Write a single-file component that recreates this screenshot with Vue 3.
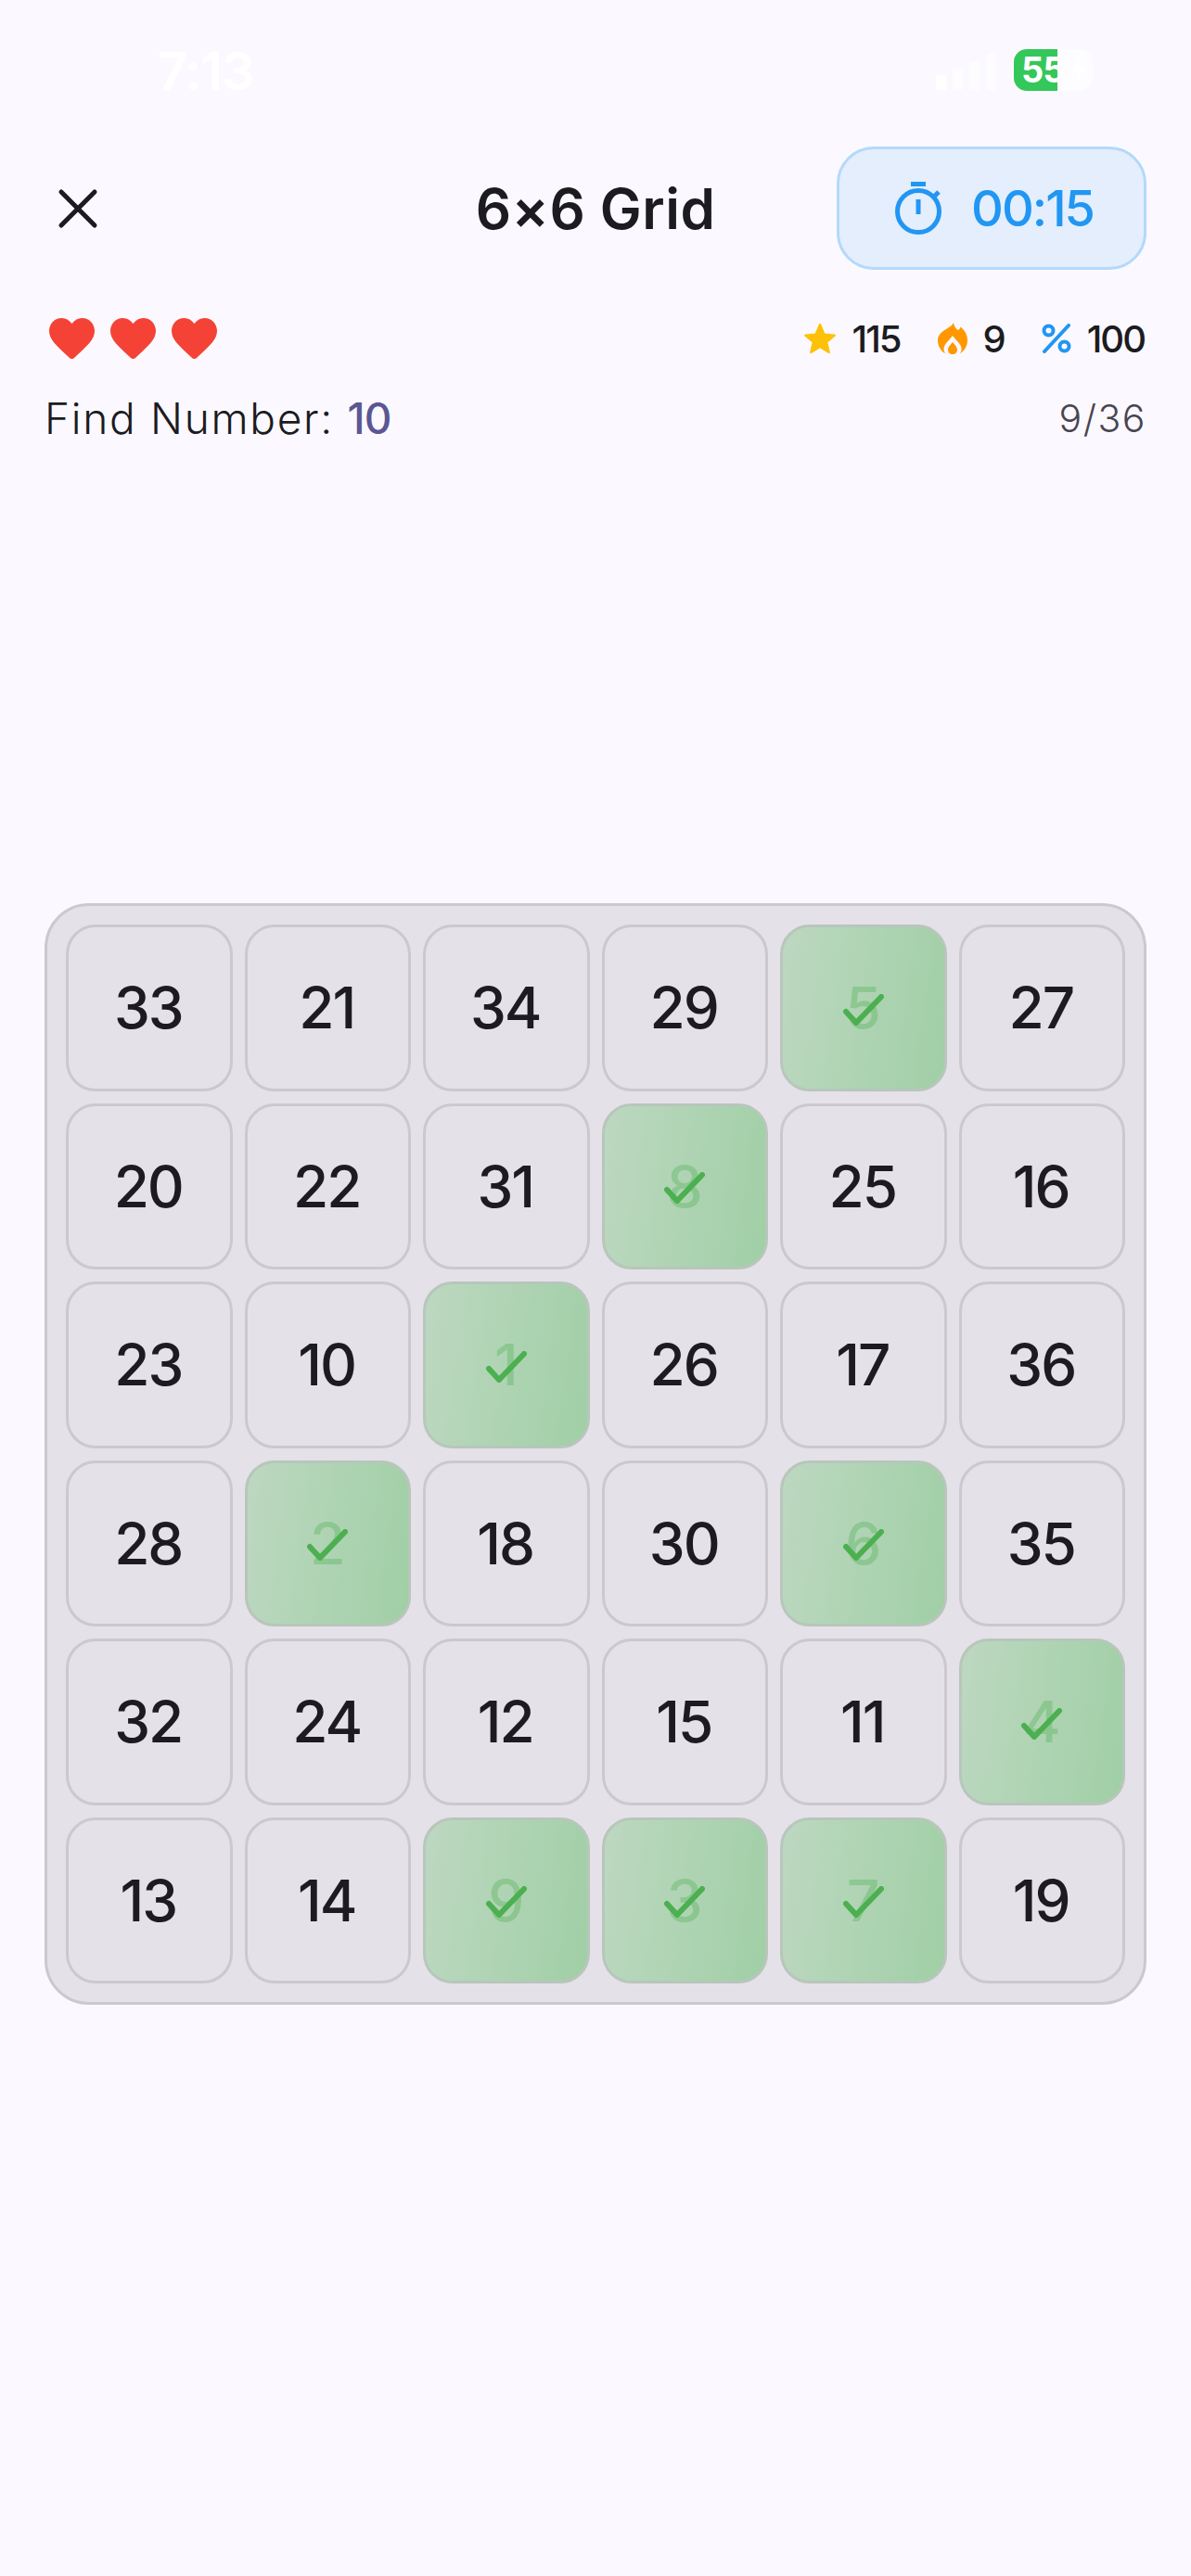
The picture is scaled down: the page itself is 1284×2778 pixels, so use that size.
<template>
  <div class="screen">
    <div class="status-bar">
      <span class="time">7:13</span>
      <div class="status-right">
        <svg class="signal" width="66" height="40" viewBox="0 0 66 40">
          <rect x="0" y="24" width="11" height="16" rx="2" />
          <rect class="off" x="18" y="17" width="11" height="23" rx="2" />
          <rect class="off" x="36" y="9" width="11" height="31" rx="2" />
          <rect class="off" x="54" y="0" width="11" height="40" rx="2" />
        </svg>
        <div class="battery">
          <div class="battery-fill"></div>
          <span class="battery-text">55</span>
          <svg class="bolt" width="18" height="29" viewBox="0 0 18 29">
            <path d="M11 0 L1 17 H8 L6 29 L17 11 H10 Z" />
          </svg>
        </div>
      </div>
    </div>

    <header class="top-bar">
      <svg class="close" width="44" height="44" viewBox="0 0 44 44">
        <path d="M4 4 L40 40 M40 4 L4 40" />
      </svg>
      <h1 class="title">6×6 Grid</h1>
      <div class="timer">
        <svg class="timer-icon" width="50" height="57" viewBox="0 0 50 57">
          <path d="M17 2.500 H33" />
          <circle cx="25" cy="32" r="22.500" />
          <path d="M25 19 V35 M41 17 L47 11" />
        </svg>
        <span>00:15</span>
      </div>
    </header>

    <div class="stats-row">
      <div class="hearts">
        <svg v-for="n in 3" :key="n" width="49" height="44" viewBox="0 0 49 44">
          <path d="M24.500 6 C21.500 2 18 0 13.500 0 C6 0 0 6 0 14 C0 23 8 30 21.500 42.500 C23.500 44.500 25.500 44.500 27.500 42.500 C41 30 49 23 49 14 C49 6 43 0 35.500 0 C31 0 27.500 2 24.500 6 Z" />
        </svg>
      </div>
      <div class="stats">
        <div class="stat">
          <svg width="36" height="36" viewBox="0 0 24 24">
            <path fill="#ffc107" stroke="#ffc107" stroke-width="1.500" stroke-linejoin="round" d="M12 2 L15 9 L22.500 9.700 L16.800 14.600 L18.500 22 L12 18.100 L5.500 22 L7.200 14.600 L1.500 9.700 L9 9 Z" />
          </svg>
          <span>115</span>
        </div>
        <div class="stat">
          <svg width="32" height="34" viewBox="0 0 32 34">
            <path fill="#ff9800" d="M17 0 C18 5 20 7 22 8 C23.500 7 24 6 24.500 4.500 C29 8 32 13 32 19 C32 25 29 30 24 33.500 C26 30 26 27 24 23.500 C22 20.500 18.500 17.500 16 14 C13.500 17.500 10 20.500 8 23.500 C6 27 6 30 8 33.500 C3 30 0 25 0 19 C0 11 8 8 12 5 C14 4 16 2 17 0 Z" />
            <path fill="#ff9800" d="M16 21 C18.500 24 21 26 21 29 C21 32 19 34 16 34 C13 34 11 32 11 29 C11 26 13.500 24 16 21 Z" />
          </svg>
          <span>9</span>
        </div>
        <div class="stat">
          <svg class="percent" width="32" height="32" viewBox="0 0 32 32">
            <circle cx="7.500" cy="7.500" r="5" />
            <circle cx="24.500" cy="24.500" r="5" />
            <path d="M29 2 L3 30" />
          </svg>
          <span>100</span>
        </div>
      </div>
    </div>

    <div class="find-row">
      <div class="find">Find Number: <span class="target">10</span></div>
      <div class="progress">9/36</div>
    </div>

    <main class="board">
      <div v-for="cell in cells" :key="cell" class="cell" :class="{ found: cell <= 9 }">
        <span class="num">{{ cell }}</span>
        <svg v-if="cell <= 9" class="check" width="44" height="34" viewBox="0 0 44 34">
          <path d="M3 19 L14 31 L41 3" />
        </svg>
      </div>
    </main>
  </div>
</template>

<script setup>
const cells = [
  33, 21, 34, 29, 5, 27,
  20, 22, 31, 8, 25, 16,
  23, 10, 1, 26, 17, 36,
  28, 2, 18, 30, 6, 35,
  32, 24, 12, 15, 11, 4,
  13, 14, 9, 3, 7, 19,
]
</script>

<style>
html,
body {
  background: #fbf9ff;
}
</style>

<style scoped>
.screen {
  width: 1284px;
  height: 2778px;
  background: #fbf9ff;
  font-family: Inter, "Liberation Sans", sans-serif;
  color: #1c1b1f;
  overflow: hidden;
}

.status-bar {
  height: 158px;
  box-sizing: border-box;
  padding: 50px 106px 0 170px;
  display: flex;
  justify-content: space-between;
  align-items: flex-start;
  color: #fff;
}

.time {
  font-size: 56px;
  line-height: 54px;
  font-weight: 600;
  letter-spacing: -1px;
}

.status-right {
  display: flex;
  align-items: flex-start;
  gap: 18px;
}

.signal {
  fill: #fff;
  margin-top: 7px;
}

.signal .off {
  opacity: 0.45;
}

.battery {
  position: relative;
  width: 85px;
  height: 45px;
  margin-top: 3px;
  background: rgba(255, 255, 255, 0.45);
  border-radius: 14px;
  overflow: hidden;
}

.battery-fill {
  position: absolute;
  left: 0;
  top: 0;
  bottom: 0;
  width: 47px;
  background: #34c759;
}

.battery-text {
  position: absolute;
  left: 8px;
  top: 3px;
  font-size: 38px;
  line-height: 38px;
  font-weight: 700;
  color: #fff;
  letter-spacing: -1px;
}

.bolt {
  position: absolute;
  right: 6px;
  top: 8px;
  fill: #fff;
}

.top-bar {
  height: 133px;
  box-sizing: border-box;
  padding: 0 48px;
  display: grid;
  grid-template-columns: 1fr auto 1fr;
  align-items: center;
}

.close {
  margin-left: 14px;
  fill: none;
  stroke: #1c1b1f;
  stroke-width: 5;
  stroke-linecap: round;
}

.title {
  margin: 0;
  font-size: 60px;
  line-height: 1;
  font-weight: 600;
  letter-spacing: 0.5px;
}

.timer {
  justify-self: end;
  width: 334px;
  height: 133px;
  box-sizing: border-box;
  padding-left: 6px;
  border: 3px solid #b3d9fb;
  border-radius: 40px;
  background: #e4eefc;
  color: #2196f3;
  display: flex;
  align-items: center;
  justify-content: center;
  gap: 32px;
  font-size: 54px;
  font-weight: 500;
  letter-spacing: -2px;
}

.timer-icon {
  fill: none;
  stroke: #2196f3;
  stroke-width: 5;
}

.stats-row {
  margin-top: 46px;
  padding: 0 50px 0 53px;
  display: flex;
  justify-content: space-between;
  align-items: center;
  height: 56px;
}

.hearts {
  display: flex;
  gap: 17px;
  fill: #f44336;
}

.stats {
  display: flex;
  gap: 40px;
}

.stat {
  display: flex;
  align-items: center;
  gap: 17px;
  font-size: 40px;
  font-weight: 500;
  letter-spacing: -2px;
}

.percent {
  fill: none;
  stroke: #2196f3;
  stroke-width: 4;
  stroke-linecap: round;
}

.find-row {
  margin-top: 28px;
  padding: 0 48px;
  display: flex;
  justify-content: space-between;
  align-items: center;
  height: 60px;
}

.find {
  font-size: 46px;
  font-weight: 300;
  letter-spacing: 1.700px;
}

.target {
  color: #5a5794;
  font-weight: 500;
  letter-spacing: -1px;
}

.progress {
  font-size: 41px;
  font-weight: 300;
  color: #49454f;
  letter-spacing: 1.500px;
}

.board {
  margin: 493px 48px 0;
  box-sizing: border-box;
  width: 1188px;
  height: 1188px;
  padding: 20px;
  border: 3px solid #cbc8cf;
  border-radius: 48px;
  background: #e4e1e8;
  display: grid;
  grid-template-columns: repeat(6, 1fr);
  grid-template-rows: repeat(6, 1fr);
  gap: 13px;
}

.cell {
  position: relative;
  box-sizing: border-box;
  padding-right: 2px;
  border: 3px solid #cbc8cf;
  border-radius: 32px;
  display: flex;
  align-items: center;
  justify-content: center;
  font-size: 62px;
  font-weight: 500;
  letter-spacing: -2px;
}

.cell.found {
  border-color: #b8c6bb;
  background: linear-gradient(98deg, #bdd8c1, #a0cfa5);
}

.cell.found .num {
  color: rgba(76, 175, 80, 0.35);
}

.check {
  position: absolute;
  left: 50%;
  top: 50%;
  transform: translate(-50%, -50%);
  margin-top: 2px;
  fill: none;
  stroke: #4caf50;
  stroke-width: 6;
  stroke-linecap: round;
  stroke-linejoin: round;
}
</style>
